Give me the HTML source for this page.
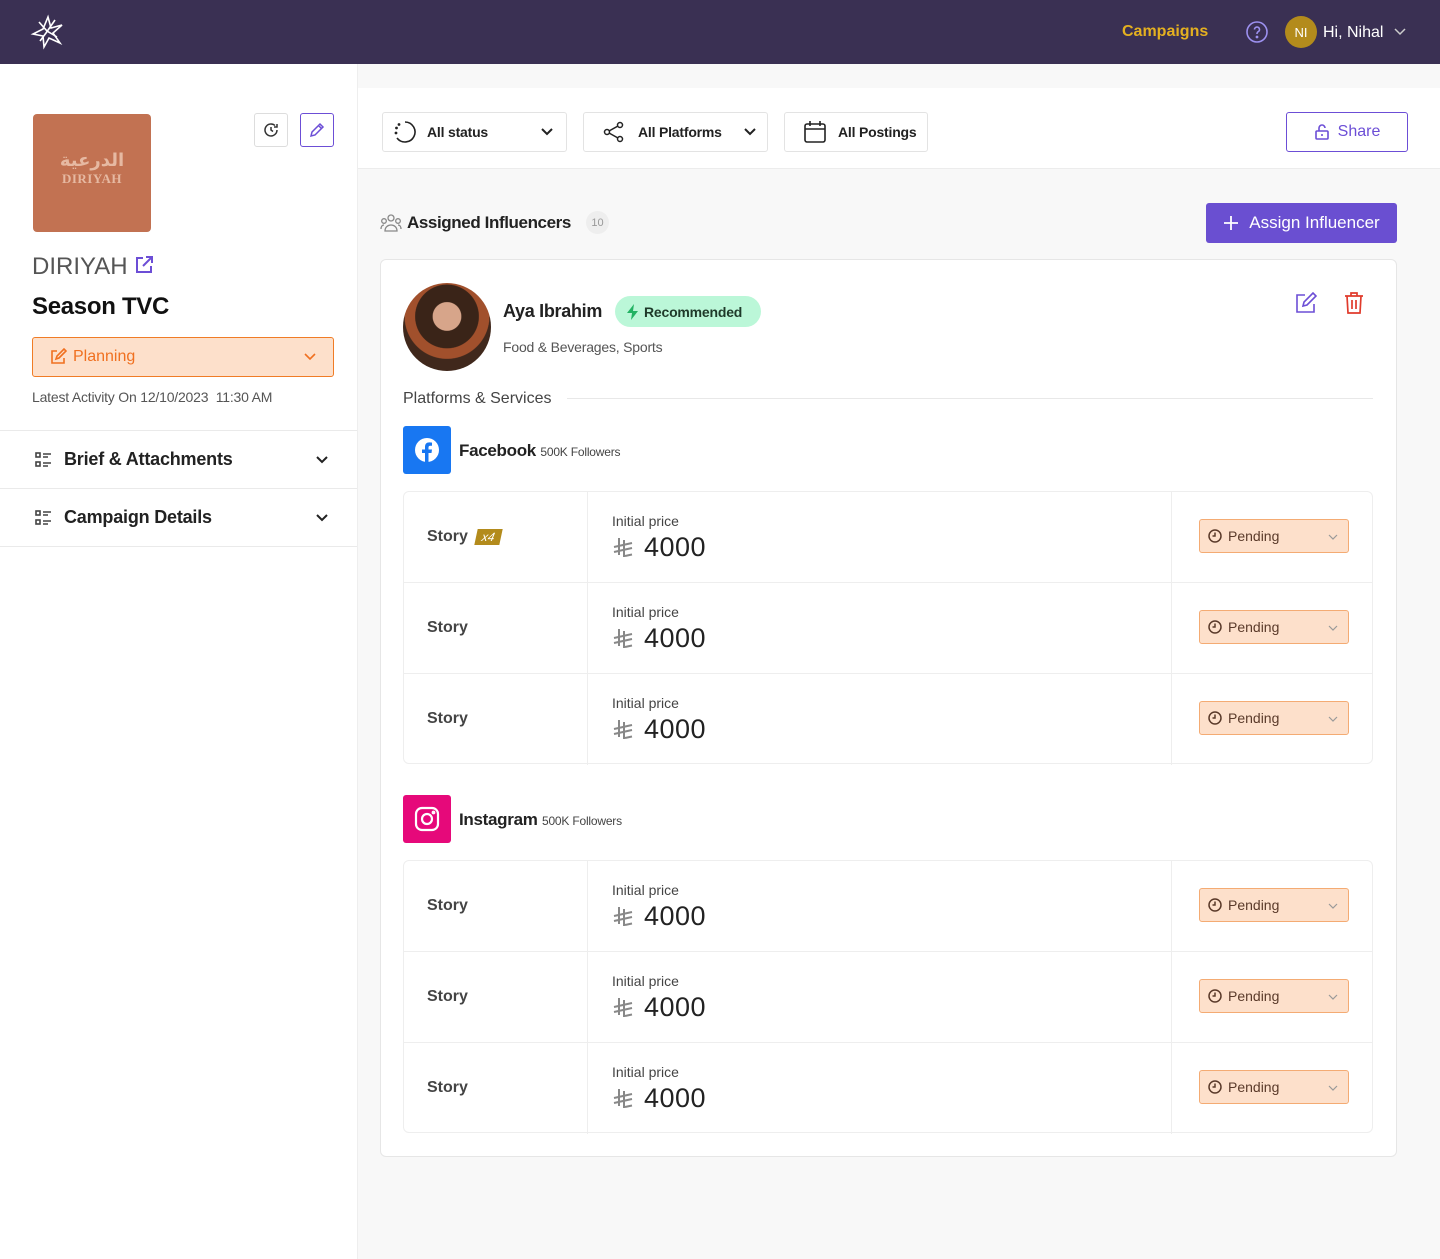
<!DOCTYPE html>
<html><head><meta charset="utf-8"><style>
*{box-sizing:border-box;margin:0;padding:0}
body{width:1440px;height:1259px;position:relative;background:#f8f8f8;font-family:"Liberation Sans","Noto Sans CJK SC",sans-serif;color:#1f1f1f;overflow:hidden}
.a{position:absolute}
.hdr{left:0;top:0;width:1440px;height:64px;background:#3a3053}
.side{left:0;top:64px;width:358px;height:1195px;background:#fff;border-right:1px solid #eee}
.fbar{left:358px;top:88px;width:1082px;height:81px;background:#fff;border-bottom:1px solid #ececec}
.fb{height:40px;top:112px;border:1px solid #e3e3e3;border-radius:3px;display:flex;align-items:center;font-size:14px;font-weight:bold;color:#222;letter-spacing:-0.2px}
.card{left:380px;top:259px;width:1017px;height:898px;background:#fff;border:1px solid #e6e6e6;border-radius:6px}
.tbl{left:403px;width:970px;height:273px;border:1px solid #eee;border-radius:6px;background:#fff}
.row{position:absolute;left:0;width:968px;height:91px;border-bottom:1px solid #eee}
.row:last-child{border-bottom:none}
.c1{position:absolute;left:183px;top:0;height:91px;border-left:1px solid #eee}
.c2{position:absolute;left:767px;top:0;height:91px;border-left:1px solid #eee}
.st{position:absolute;left:23px;top:36px;font-size:16px;font-weight:bold;color:#444}
.ip{position:absolute;left:208px;top:21px;font-size:14px;color:#444}
.pr{position:absolute;left:208px;top:40px;font-size:27px;color:#222;display:flex;align-items:center;gap:10px;letter-spacing:0.5px}
.pd{position:absolute;left:795px;top:27px;width:150px;height:34px;background:#fde0cb;border:1px solid #f4ab73;border-radius:3px;display:flex;align-items:center;padding-left:8px;font-size:14px;color:#5a3a2a;gap:6px}
.pd .ch{position:absolute;right:10px;top:13px}
.acc{left:0;width:357px;height:58px;border-bottom:1px solid #eaeaea;display:flex;align-items:center;padding-left:34px;font-size:18px;font-weight:bold;color:#222;letter-spacing:-0.2px}
</style></head><body>
<div class="a hdr"></div>
<svg class="a" style="left:30px;top:14px" width="36" height="36" viewBox="0 0 36 36" fill="none" stroke="#fff" stroke-width="1.6"><path d="M18 3 L21 14 L32 11 L23 19 L30 29 L19 24 L14 33 L13 22 L3 20 L13 15 Z"/><path d="M9 8 L17 17 L27 23 M25 6 L16 19 L10 27"/></svg>
<div class="a" style="left:1122px;top:23px;font-size:16px;font-weight:bold;color:#e4b020">Campaigns</div>
<svg class="a" style="left:1245px;top:20px" width="24" height="24" viewBox="0 0 24 24" fill="none" stroke="#9d91f0" stroke-width="1.6"><circle cx="12" cy="12" r="10"/><path d="M9.5 9.5a2.5 2.5 0 1 1 3.5 2.3c-.7.4-1 .9-1 1.7v.5"/><circle cx="12" cy="17" r=".6" fill="#9d91f0"/></svg>
<div class="a" style="left:1285px;top:16px;width:32px;height:32px;border-radius:50%;background:#b38b1c;color:#fff;font-size:13px;display:flex;align-items:center;justify-content:center">NI</div>
<div class="a" style="left:1323px;top:24px;font-size:16px;color:#fff">Hi, Nihal</div>
<svg class="a" style="left:1393px;top:27px" width="14" height="10" viewBox="0 0 14 10" fill="none" stroke="#ccc" stroke-width="1.5"><path d="M2 2l5 5 5-5"/></svg>

<div class="a side"></div>
<div class="a" style="left:33px;top:114px;width:118px;height:118px;background:#c27252;border-radius:4px;text-align:center;color:#e6b9a2;font-family:'Liberation Serif',serif;font-weight:bold">
<div style="margin-top:36px;font-size:18px;font-family:'DejaVu Sans',sans-serif">الدرعية</div><div style="font-size:13px;letter-spacing:0.5px">DIRIYAH</div></div>
<div class="a" style="left:254px;top:113px;width:34px;height:34px;border:1px solid #ddd;border-radius:3px"></div>
<svg class="a" style="left:262px;top:121px" width="18" height="18" viewBox="0 0 18 18" fill="none" stroke="#333" stroke-width="1.5"><path d="M15 9a6 6 0 1 1-2-4.5"/><path d="M15 3v3h-3"/><path d="M9 6v3l2 1.5"/></svg>
<div class="a" style="left:300px;top:113px;width:34px;height:34px;border:1px solid #6c4ed6;border-radius:3px"></div>
<svg class="a" style="left:308px;top:121px" width="18" height="18" viewBox="0 0 18 18" fill="none" stroke="#6c4ed6" stroke-width="1.5"><path d="M3 15l1-4 8-8 3 3-8 8z M10.5 4.5l3 3"/></svg>
<div class="a" style="left:32px;top:253px;font-size:24px;color:#555">DIRIYAH</div>
<svg class="a" style="left:134px;top:255px" width="20" height="20" viewBox="0 0 20 20" fill="none" stroke="#6c4ed6" stroke-width="2"><path d="M9 3H3v14h14v-6M12 2h6v6M18 2l-9 9"/></svg>
<div class="a" style="left:32px;top:293px;font-size:24px;font-weight:bold;color:#111;letter-spacing:-0.3px">Season TVC</div>
<div class="a" style="left:32px;top:337px;width:302px;height:40px;background:#fde0cb;border:1px solid #f07c26;border-radius:3px;display:flex;align-items:center;padding-left:16px;gap:6px;font-size:16px;color:#f07020">
<svg width="18" height="18" viewBox="0 0 18 18" fill="none" stroke="#f07020" stroke-width="1.6"><path d="M8 3H3v12h12v-5M7 11l1-3 7-7 2 2-7 7z"/></svg>Planning
<svg style="position:absolute;right:16px;top:14px" width="14" height="10" viewBox="0 0 14 10" fill="none" stroke="#f07020" stroke-width="1.6"><path d="M2 2l5 5 5-5"/></svg></div>
<div class="a" style="left:32px;top:389px;font-size:14px;color:#555;letter-spacing:-0.2px">Latest Activity On 12/10/2023&nbsp; 11:30 AM</div>
<div class="a" style="left:0;top:430px;width:357px;border-top:1px solid #eaeaea"></div>
<div class="a acc" style="top:431px"><svg width="20" height="18" viewBox="0 0 20 18" fill="none" stroke="#444" stroke-width="1.6" style="margin-right:10px"><rect x="2" y="2" width="4" height="4"/><rect x="2" y="11" width="4" height="4"/><path d="M9 3h8M9 6h5M9 12h8M9 15h5"/></svg>Brief &amp; Attachments<svg style="position:absolute;right:28px" width="14" height="10" viewBox="0 0 14 10" fill="none" stroke="#222" stroke-width="2"><path d="M2 2l5 5 5-5"/></svg></div>
<div class="a acc" style="top:489px"><svg width="20" height="18" viewBox="0 0 20 18" fill="none" stroke="#444" stroke-width="1.6" style="margin-right:10px"><rect x="2" y="2" width="4" height="4"/><rect x="2" y="11" width="4" height="4"/><path d="M9 3h8M9 6h5M9 12h8M9 15h5"/></svg>Campaign Details<svg style="position:absolute;right:28px" width="14" height="10" viewBox="0 0 14 10" fill="none" stroke="#222" stroke-width="2"><path d="M2 2l5 5 5-5"/></svg></div>

<div class="a fbar"></div>
<div class="a fb" style="left:382px;width:185px;padding-left:10px;gap:10px"><svg width="24" height="24" viewBox="0 0 24 24" fill="none" stroke="#222" stroke-width="1.6"><path d="M12 2a10 10 0 1 1-8 16"/><circle cx="3" cy="13" r=".6" fill="#222"/><circle cx="3.5" cy="8" r=".6" fill="#222"/><circle cx="6" cy="4.5" r=".6" fill="#222"/></svg>All status<svg style="position:absolute;right:12px" width="14" height="10" viewBox="0 0 14 10" fill="none" stroke="#222" stroke-width="2"><path d="M2 2l5 5 5-5"/></svg></div>
<div class="a fb" style="left:583px;width:185px;padding-left:18px;gap:12px"><svg width="24" height="24" viewBox="0 0 24 24" fill="none" stroke="#222" stroke-width="1.5"><circle cx="18" cy="5" r="2.5"/><circle cx="5" cy="12" r="2.5"/><circle cx="18" cy="19" r="2.5"/><path d="M7 11l9-5M7 13l9 5"/></svg>All Platforms<svg style="position:absolute;right:10px" width="14" height="10" viewBox="0 0 14 10" fill="none" stroke="#222" stroke-width="2"><path d="M2 2l5 5 5-5"/></svg></div>
<div class="a fb" style="left:784px;width:144px;padding-left:17px;gap:10px"><svg width="26" height="26" viewBox="0 0 26 26" fill="none" stroke="#222" stroke-width="1.6"><rect x="3" y="5" width="20" height="18" rx="2"/><path d="M3 10h20M8 2v5M18 2v5"/></svg>All Postings</div>
<div class="a" style="left:1286px;top:112px;width:122px;height:40px;border:1px solid #6c4ed6;border-radius:3px;display:flex;align-items:center;justify-content:center;gap:8px;font-size:16px;color:#6c4ed6;background:#fff"><svg width="16" height="18" viewBox="0 0 16 18" fill="none" stroke="#6c4ed6" stroke-width="1.6"><rect x="2" y="8" width="12" height="8" rx="1"/><path d="M5 8V5a3 3 0 0 1 6 0"/><path d="M8 11v2"/></svg>Share</div>

<svg class="a" style="left:380px;top:213px" width="22" height="20" viewBox="0 0 22 20" fill="none" stroke="#888" stroke-width="1.3"><circle cx="11" cy="5" r="3"/><circle cx="4" cy="8" r="2.3"/><circle cx="18" cy="8" r="2.3"/><path d="M5 18c0-4 3-6 6-6s6 2 6 6zM1 16c0-2 1-4 3-4M21 16c0-2-1-4-3-4"/></svg>
<div class="a" style="left:407px;top:213px;font-size:17px;font-weight:bold;color:#222;letter-spacing:-0.4px">Assigned Influencers</div>
<div class="a" style="left:586px;top:211px;width:23px;height:23px;border-radius:50%;background:#eee;font-size:11px;color:#999;display:flex;align-items:center;justify-content:center">10</div>
<div class="a" style="left:1206px;top:203px;width:191px;height:40px;background:#6a4fd1;border-radius:3px;color:#fff;font-size:17px;display:flex;align-items:center;justify-content:center;gap:10px"><svg width="16" height="16" viewBox="0 0 16 16" stroke="#fff" stroke-width="1.8"><path d="M8 1v14M1 8h14"/></svg>Assign Influencer</div>

<div class="a card"></div>
<div class="a" style="left:403px;top:283px;width:88px;height:88px;border-radius:50%;background:radial-gradient(circle at 50% 38%,#d7a58a 0 20%,#3a2418 21% 45%,#a1502c 46% 60%,#40281c 61%)"></div>
<div class="a" style="left:503px;top:301px;font-size:18px;font-weight:bold;color:#222;letter-spacing:-0.3px">Aya Ibrahim</div>
<div class="a" style="left:615px;top:296px;width:146px;height:31px;border-radius:16px;background:#bbf7d8;display:flex;align-items:center;padding-left:11px;gap:4px;font-size:14px;font-weight:bold;color:#1f3a2a;letter-spacing:-0.2px"><svg width="14" height="16" viewBox="0 0 14 16"><path d="M8 0L1 9h5l-1 7 7-9H7z" fill="#22b363"/></svg>Recommended</div>
<div class="a" style="left:503px;top:339px;font-size:14px;color:#555;letter-spacing:-0.2px">Food &amp; Beverages, Sports</div>
<svg class="a" style="left:1295px;top:292px" width="22" height="22" viewBox="0 0 22 22" fill="none" stroke="#6c4ed6" stroke-width="1.6"><path d="M10 3H2v17h17v-8M8 14l1-4 9-9 3 3-9 9z"/></svg>
<svg class="a" style="left:1343px;top:291px" width="22" height="24" viewBox="0 0 22 24" fill="none" stroke="#e03b2c" stroke-width="1.7"><path d="M2 5h18M8 5V2h6v3M4 5l1 17h12l1-17M9 9v9M13 9v9"/></svg>
<div class="a" style="left:403px;top:390px;font-size:16px;color:#444">Platforms &amp; Services</div>
<div class="a" style="left:567px;top:398px;width:806px;border-top:1px solid #e8e8e8"></div>

<div class="a" style="left:403px;top:426px;width:48px;height:48px;background:#1877f2;border-radius:3px"></div>
<svg class="a" style="left:415px;top:438px" width="24" height="24" viewBox="0 0 24 24"><circle cx="12" cy="12" r="12" fill="#fff"/><path d="M13.5 24v-9h3l.5-3.5h-3.5V9.5c0-1 .4-1.8 1.8-1.8H17V4.6c-.4-.1-1.5-.2-2.7-.2-2.7 0-4.3 1.6-4.3 4.5v2.6H7V15h3v9z" fill="#1877f2"/></svg>
<div class="a" style="left:459px;top:441px;font-size:17px;font-weight:bold;color:#222;letter-spacing:-0.3px">Facebook <span style="font-size:12px;font-weight:normal;color:#444;letter-spacing:-0.2px">500K Followers</span></div>

<div class="a tbl" style="top:491px">
<div class="row" style="top:0"><div class="c1"></div><div class="c2"></div><div class="st">Story <span style="display:inline-block;background:#b38b1c;color:#fff;font-size:12px;font-style:italic;font-weight:normal;padding:1px 6px;transform:skewX(-12deg);margin-left:4px">x4</span></div><div class="ip">Initial price</div><div class="pr"><svg width="22" height="22" viewBox="0 0 22 22" fill="none" stroke="#888" stroke-width="2"><path d="M7 1v17M12 3v17M2 10l18-4M2 15l18-4M13 19l7-1.5"/></svg>4000</div><div class="pd"><svg width="14" height="14" viewBox="0 0 14 14" fill="none" stroke="#5a3a2a" stroke-width="1.5"><circle cx="7" cy="7" r="6"/><path d="M7 3.5V7H4.5"/></svg>Pending<svg class="ch" width="10" height="8" viewBox="0 0 10 8" fill="none" stroke="#999" stroke-width="1.2"><path d="M1 2l4 4 4-4"/></svg></div></div>
<div class="row" style="top:91px"><div class="c1"></div><div class="c2"></div><div class="st">Story</div><div class="ip">Initial price</div><div class="pr"><svg width="22" height="22" viewBox="0 0 22 22" fill="none" stroke="#888" stroke-width="2"><path d="M7 1v17M12 3v17M2 10l18-4M2 15l18-4M13 19l7-1.5"/></svg>4000</div><div class="pd"><svg width="14" height="14" viewBox="0 0 14 14" fill="none" stroke="#5a3a2a" stroke-width="1.5"><circle cx="7" cy="7" r="6"/><path d="M7 3.5V7H4.5"/></svg>Pending<svg class="ch" width="10" height="8" viewBox="0 0 10 8" fill="none" stroke="#999" stroke-width="1.2"><path d="M1 2l4 4 4-4"/></svg></div></div>
<div class="row" style="top:182px"><div class="c1"></div><div class="c2"></div><div class="st">Story</div><div class="ip">Initial price</div><div class="pr"><svg width="22" height="22" viewBox="0 0 22 22" fill="none" stroke="#888" stroke-width="2"><path d="M7 1v17M12 3v17M2 10l18-4M2 15l18-4M13 19l7-1.5"/></svg>4000</div><div class="pd"><svg width="14" height="14" viewBox="0 0 14 14" fill="none" stroke="#5a3a2a" stroke-width="1.5"><circle cx="7" cy="7" r="6"/><path d="M7 3.5V7H4.5"/></svg>Pending<svg class="ch" width="10" height="8" viewBox="0 0 10 8" fill="none" stroke="#999" stroke-width="1.2"><path d="M1 2l4 4 4-4"/></svg></div></div>
</div>

<div class="a" style="left:403px;top:795px;width:48px;height:48px;background:#e6097a;border-radius:3px"></div>
<svg class="a" style="left:414px;top:806px" width="26" height="26" viewBox="0 0 26 26" fill="none" stroke="#fff" stroke-width="2.2"><rect x="2" y="2" width="22" height="22" rx="6"/><circle cx="13" cy="13" r="5"/><circle cx="19.5" cy="6.5" r=".8" fill="#fff"/></svg>
<div class="a" style="left:459px;top:810px;font-size:17px;font-weight:bold;color:#222;letter-spacing:-0.3px">Instagram <span style="font-size:12px;font-weight:normal;color:#444;letter-spacing:-0.2px">500K Followers</span></div>

<div class="a tbl" style="top:860px">
<div class="row" style="top:0"><div class="c1"></div><div class="c2"></div><div class="st">Story</div><div class="ip">Initial price</div><div class="pr"><svg width="22" height="22" viewBox="0 0 22 22" fill="none" stroke="#888" stroke-width="2"><path d="M7 1v17M12 3v17M2 10l18-4M2 15l18-4M13 19l7-1.5"/></svg>4000</div><div class="pd"><svg width="14" height="14" viewBox="0 0 14 14" fill="none" stroke="#5a3a2a" stroke-width="1.5"><circle cx="7" cy="7" r="6"/><path d="M7 3.5V7H4.5"/></svg>Pending<svg class="ch" width="10" height="8" viewBox="0 0 10 8" fill="none" stroke="#999" stroke-width="1.2"><path d="M1 2l4 4 4-4"/></svg></div></div>
<div class="row" style="top:91px"><div class="c1"></div><div class="c2"></div><div class="st">Story</div><div class="ip">Initial price</div><div class="pr"><svg width="22" height="22" viewBox="0 0 22 22" fill="none" stroke="#888" stroke-width="2"><path d="M7 1v17M12 3v17M2 10l18-4M2 15l18-4M13 19l7-1.5"/></svg>4000</div><div class="pd"><svg width="14" height="14" viewBox="0 0 14 14" fill="none" stroke="#5a3a2a" stroke-width="1.5"><circle cx="7" cy="7" r="6"/><path d="M7 3.5V7H4.5"/></svg>Pending<svg class="ch" width="10" height="8" viewBox="0 0 10 8" fill="none" stroke="#999" stroke-width="1.2"><path d="M1 2l4 4 4-4"/></svg></div></div>
<div class="row" style="top:182px"><div class="c1"></div><div class="c2"></div><div class="st">Story</div><div class="ip">Initial price</div><div class="pr"><svg width="22" height="22" viewBox="0 0 22 22" fill="none" stroke="#888" stroke-width="2"><path d="M7 1v17M12 3v17M2 10l18-4M2 15l18-4M13 19l7-1.5"/></svg>4000</div><div class="pd"><svg width="14" height="14" viewBox="0 0 14 14" fill="none" stroke="#5a3a2a" stroke-width="1.5"><circle cx="7" cy="7" r="6"/><path d="M7 3.5V7H4.5"/></svg>Pending<svg class="ch" width="10" height="8" viewBox="0 0 10 8" fill="none" stroke="#999" stroke-width="1.2"><path d="M1 2l4 4 4-4"/></svg></div></div>
</div>
</body></html>
